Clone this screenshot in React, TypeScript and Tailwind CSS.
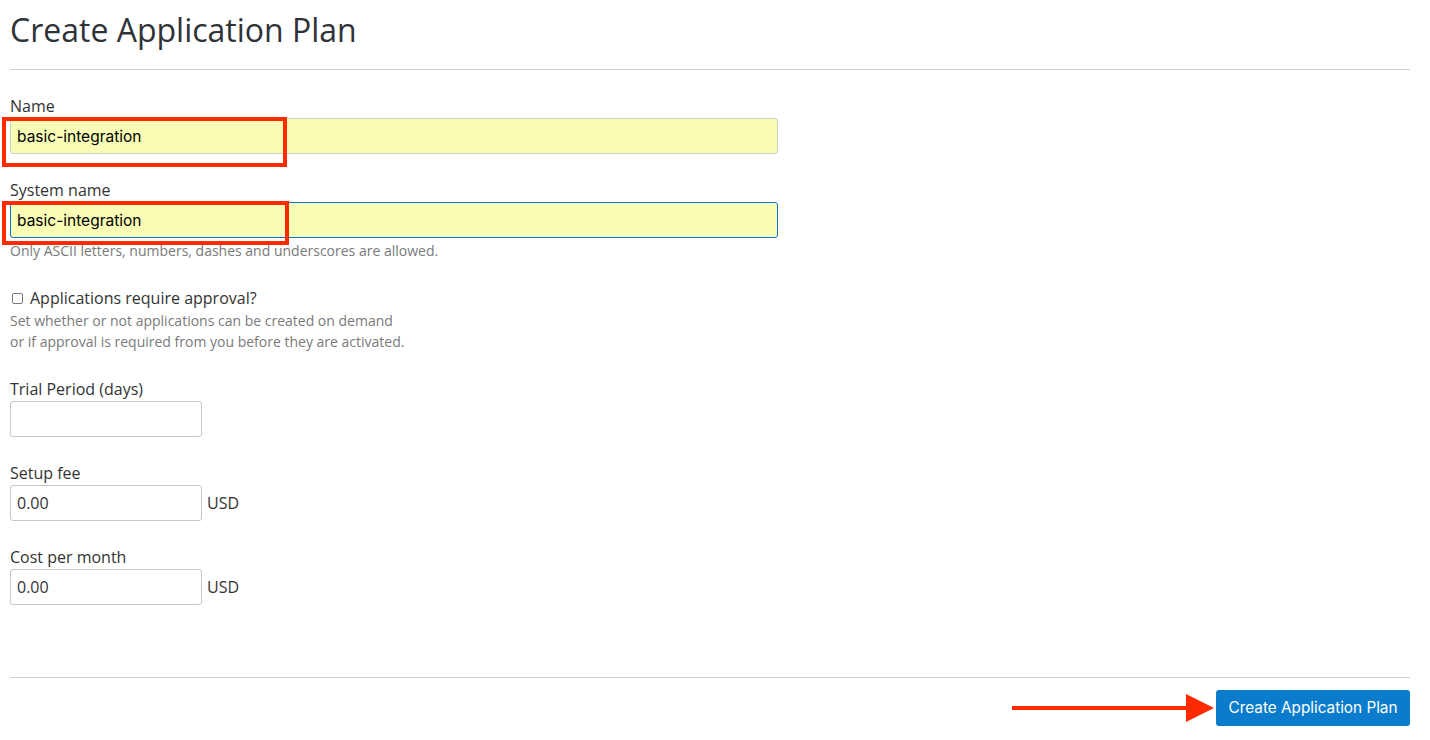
import React from "react";

const sans = { fontFamily: '"Open Sans", "Noto Sans", sans-serif' };
const system = { fontFamily: 'Inter, "Liberation Sans", sans-serif' };

function Field({ label, children }: { label: string; children: React.ReactNode }) {
  return (
    <div className="flex flex-col">
      <label className="text-[16px] leading-[22px] text-[#333]">{label}</label>
      <div className="mt-[1px]">{children}</div>
    </div>
  );
}

function SmallInput({ value }: { value?: string }) {
  return (
    <div className="flex h-[36px] w-[192px] items-center rounded-[3px] border border-[#c8c8c8] bg-white px-[6px] text-[16px] text-[#333]">
      {value}
    </div>
  );
}

export default function App() {
  return (
    <div className="min-h-[740px] w-[1430px] bg-white px-[10px]" style={sans}>
      <h1 className="pt-[10px] text-[32px] leading-[40px] text-[#2f3338]">Create Application Plan</h1>
      <hr className="mt-[19px] w-[1400px] border-t border-[#cfcfcf]" />

      <div className="mt-[25px] flex flex-col">
        <Field label="Name">
          <div className="relative">
            <div
              className="flex h-[36px] w-[768px] items-center rounded-[3px] border border-[#cccccc] bg-[#f8fcb5] px-[6px] pt-[1px] text-[15.5px] text-black"
              style={system}
            >
              basic-integration
            </div>
            <div className="absolute left-[-8px] top-[-1px] h-[50px] w-[285px] border-[4px] border-[#ff2a00]" />
          </div>
        </Field>

        <div className="mt-[25px]">
          <Field label="System name">
            <div className="relative">
              <div
                className="flex h-[36px] w-[768px] items-center rounded-[3px] border border-[#0a73c9] bg-[#f8fcb5] px-[6px] pt-[1px] text-[15.5px] text-black"
                style={system}
              >
                basic-integration
              </div>
              <div className="absolute left-[-8px] top-[-1px] h-[44px] w-[287px] border-[4px] border-[#ff2a00]" />
            </div>
          </Field>
          <p className="mt-[3px] text-[14px] leading-[20px] text-[#7a7a7a]">
            Only ASCII letters, numbers, dashes and underscores are allowed.
          </p>
        </div>

        <div className="mt-[26px]">
          <label className="flex items-center gap-[7px] text-[16px] leading-[22px] text-[#333]">
            <span className="ml-[2px] inline-block h-[11px] w-[11px] rounded-[2px] border border-[#777] bg-white" />
            Applications require approval?
          </label>
          <p className="mt-[1px] text-[14px] leading-[21px] text-[#7a7a7a]">
            Set whether or not applications can be created on demand
            <br />
            or if approval is required from you before they are activated.
          </p>
        </div>

        <div className="mt-[26px]">
          <Field label="Trial Period (days)">
            <SmallInput />
          </Field>
        </div>

        <div className="mt-[25px]">
          <Field label="Setup fee">
            <div className="flex items-center gap-[5px]">
              <SmallInput value="0.00" />
              <span className="text-[16px] text-[#333]">USD</span>
            </div>
          </Field>
        </div>

        <div className="mt-[25px]">
          <Field label="Cost per month">
            <div className="flex items-center gap-[5px]">
              <SmallInput value="0.00" />
              <span className="text-[16px] text-[#333]">USD</span>
            </div>
          </Field>
        </div>
      </div>

      <hr className="mt-[72px] w-[1400px] border-t border-[#cfcfcf]" />

      <div className="mt-[12px] flex w-[1400px] items-center justify-end">
        <svg width="204" height="30" viewBox="0 0 204 30" className="mr-[2px]">
          <line x1="2" y1="15" x2="180" y2="15" stroke="#ff2a00" strokeWidth="4" />
          <polygon points="176,1 204,15 176,29" fill="#ff2a00" />
        </svg>
        <button
          className="h-[36px] rounded-[3px] bg-[#0a7ccb] px-[12.5px] text-[15.3px] text-white"
          style={system}
        >
          Create Application Plan
        </button>
      </div>
    </div>
  );
}
